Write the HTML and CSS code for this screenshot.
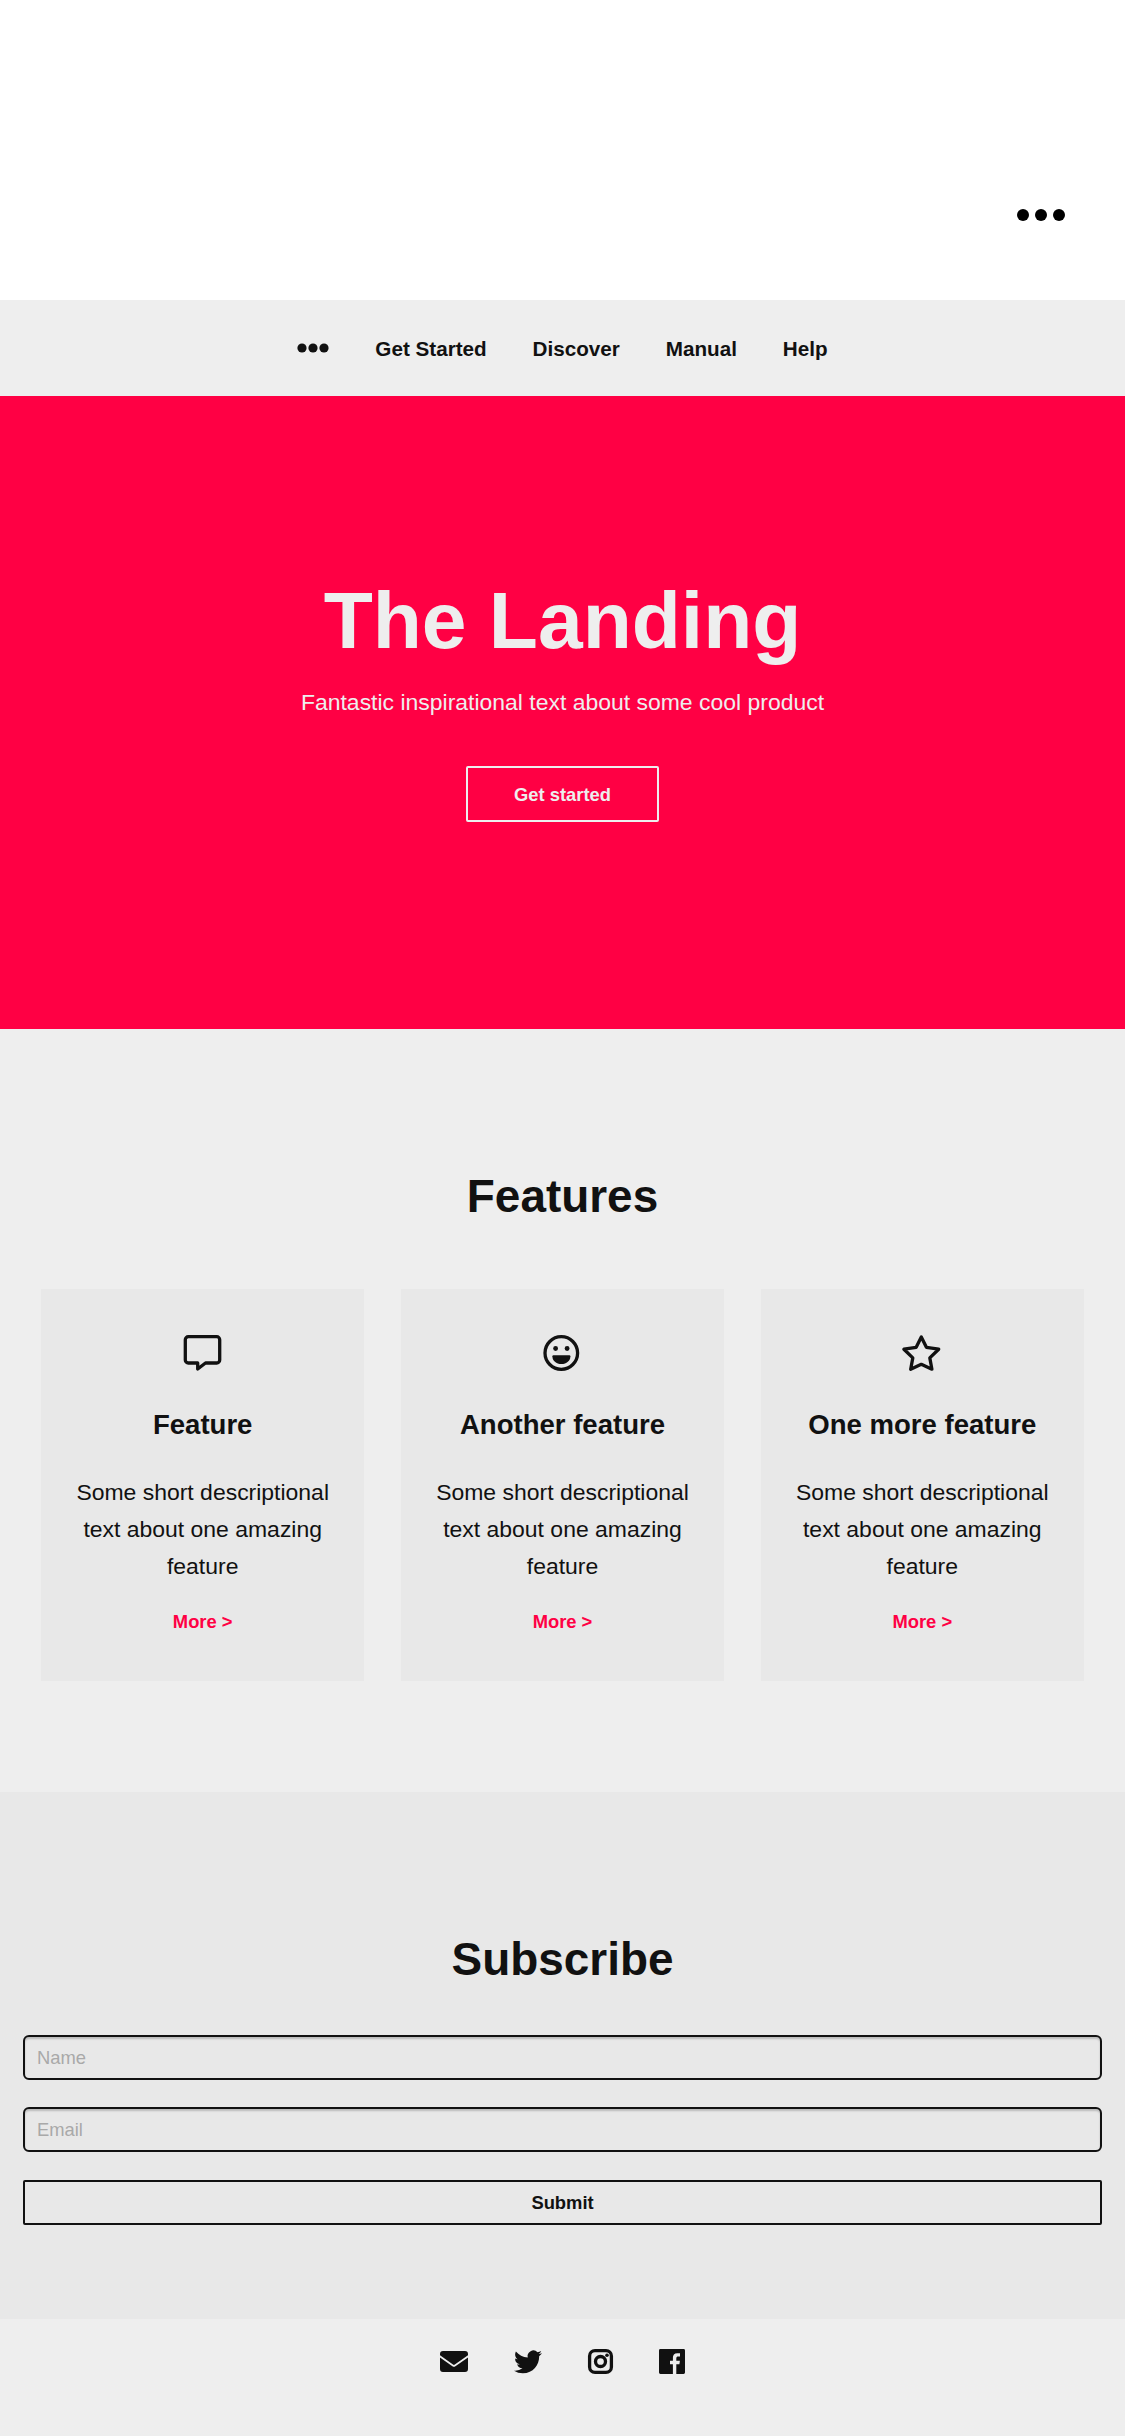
FILE: index.html
```html
<!DOCTYPE html>
<html lang="en">
<head>
<meta charset="utf-8">
<title>The Landing</title>
<link rel="stylesheet" href="styles.css">
</head>
<body>
<div class="topbar">
  <svg class="topbar-dots" viewBox="0 0 48 12"><circle cx="6" cy="6" r="6"/><circle cx="24" cy="6" r="6"/><circle cx="42" cy="6" r="6"/></svg>
</div>
<nav class="nav">
  <svg class="nav-dots" viewBox="0 0 32 10"><circle cx="5" cy="5" r="4.6"/><circle cx="16" cy="5" r="4.6"/><circle cx="27" cy="5" r="4.6"/></svg>
  <a>Get Started</a><a>Discover</a><a>Manual</a><a>Help</a>
</nav>
<header class="hero">
  <h1>The Landing</h1>
  <p>Fantastic inspirational text about some cool product</p>
  <a class="hero-button">Get started</a>
</header>
<section class="features">
  <h2>Features</h2>
  <div class="cards">
    <article class="card">
      <svg class="card-icon" viewBox="0 0 38 38"><path class="line" d="M4.3 1.7H32.7a3 3 0 0 1 3 3V25a3 3 0 0 1-3 3H21.5L13.7 34V28H4.3a3 3 0 0 1-3-3V4.7a3 3 0 0 1 3-3z"/></svg>
      <h3>Feature</h3>
      <p>Some short descriptional text about one amazing feature</p>
      <a>More &gt;</a>
    </article>
    <article class="card">
      <svg class="card-icon" viewBox="0 0 38 38"><circle class="line" cx="18.3" cy="18" r="16.3"/><circle cx="12.6" cy="13.5" r="2.4"/><circle cx="24.1" cy="13.5" r="2.4"/><path d="M10.4 20.2H26.4a1 1 0 0 1 1 1c0 4.6-3.8 7.8-9 7.8s-9-3.2-9-7.8a1 1 0 0 1 1-1z"/></svg>
      <h3>Another feature</h3>
      <p>Some short descriptional text about one amazing feature</p>
      <a>More &gt;</a>
    </article>
    <article class="card">
      <svg class="card-icon" viewBox="0 0 38 38"><path class="line" d="M18.3 2L23.4 12.3L35.7 14.2L26.8 22.9L28.9 34.2L18.3 29.3L7.7 34.2L9.8 22.9L.9 14.2L13.2 12.3z"/></svg>
      <h3>One more feature</h3>
      <p>Some short descriptional text about one amazing feature</p>
      <a>More &gt;</a>
    </article>
  </div>
</section>
<section class="subscribe">
  <h2>Subscribe</h2>
  <form class="form">
    <input type="text" placeholder="Name">
    <input type="text" placeholder="Email">
    <button type="button">Submit</button>
  </form>
</section>
<footer class="footer">
  <svg class="mail" viewBox="0 0 28 21"><path d="M3 0H25a3 3 0 0 1 3 3V4.3L14.8 13.6a1.6 1.6 0 0 1-1.8 0L0 4.3V3a3 3 0 0 1 3-3zM0 6.4L12.4 15.3a2.6 2.6 0 0 0 3 0L28 6.4V18a3 3 0 0 1-3 3H3a3 3 0 0 1-3-3z"/></svg>
  <svg class="twitter" viewBox="0 1.9 24 19.6"><path d="M23.953 4.57a10 10 0 01-2.825.775 4.958 4.958 0 002.163-2.723c-.951.555-2.005.959-3.127 1.184a4.92 4.92 0 00-8.384 4.482C7.69 8.095 4.067 6.13 1.64 3.162a4.822 4.822 0 00-.666 2.475c0 1.71.87 3.213 2.188 4.096a4.904 4.904 0 01-2.228-.616v.06a4.923 4.923 0 003.946 4.827 4.996 4.996 0 01-2.212.085 4.936 4.936 0 004.604 3.417 9.867 9.867 0 01-6.102 2.105c-.39 0-.779-.023-1.17-.067a13.995 13.995 0 007.557 2.209c9.053 0 13.998-7.496 13.998-13.985 0-.21 0-.42-.015-.63A9.935 9.935 0 0024 4.59z"/></svg>
  <svg class="instagram" viewBox="0 0 25 25"><rect class="line" x="1.6" y="1.6" width="21.8" height="21.8" rx="5.4"/><circle class="line" cx="12.5" cy="12.5" r="5"/><circle cx="19" cy="6.3" r="1.8"/></svg>
  <svg class="facebook" viewBox="0 0 26 25"><path d="M1.4 0H24.6A1.4 1.4 0 0 1 26 1.4V23.6A1.4 1.4 0 0 1 24.6 25H17.3V15.2H20.4L20.9 11.8H17.3V9.4C17.3 7.9 18 7.4 19.3 7.4H21V4.2H18.4C15.2 4.2 13.9 6.1 13.9 8.8V11.8H11V15.2H13.9V25H1.4A1.4 1.4 0 0 1 0 23.6V1.4A1.4 1.4 0 0 1 1.4 0z"/></svg>
</footer>
</body>
</html>
```
FILE: styles.css
```css
* { box-sizing: border-box; }
body {
  margin: 0;
  background: #eee;
  color: #111;
  font-family: "Liberation Sans", Helvetica, Arial, sans-serif;
  font-size: 22.96px;
  line-height: 36.74px;
}
h1, h2, h3, p { margin: 0; }
svg { display: block; flex: none; fill: #111; overflow: visible; }
.line { fill: none; stroke: #111; stroke-width: 3.3; stroke-linejoin: round; }

.topbar {
  height: 300px;
  padding: 208.5px 60px 0 0;
  background: #fff;
  display: flex;
  justify-content: flex-end;
}
.topbar-dots { width: 48px; height: 12px; fill: #000; }

.nav {
  height: 96px;
  padding-top: 2px;
  display: flex;
  align-items: center;
  justify-content: center;
  gap: 45.9px;
  font-size: 20.66px;
  font-weight: bold;
}
.nav-dots { width: 32px; height: 10px; margin-bottom: 2px; }

.hero {
  height: 633px;
  padding-top: 178px;
  background: #ff0044;
  color: #eee;
  display: flex;
  flex-direction: column;
  align-items: center;
}
.hero h1 { font-size: 80.36px; line-height: 92px; }
.hero p { margin-top: 18px; }
.hero-button {
  width: 193px;
  height: 56px;
  margin-top: 45px;
  border: 2px solid #eee;
  border-radius: 2px;
  font-size: 18.37px;
  font-weight: bold;
  line-height: 54px;
  text-align: center;
}

h2 { font-size: 45.92px; line-height: 55px; text-align: center; }
.features { height: 763px; padding: 140px 41.3px 0; }
.cards {
  margin-top: 65px;
  display: grid;
  grid-template-columns: repeat(3, 1fr);
  gap: 37px;
}
.card {
  height: 392px;
  padding: 46px 20px 0;
  background: #e8e8e8;
  display: flex;
  flex-direction: column;
  align-items: center;
  text-align: center;
}
.card-icon { width: 38px; height: 38px; }
.card h3 { margin-top: 35px; font-size: 27.55px; line-height: 33px; white-space: nowrap; }
.card p { margin-top: 33px; width: 270px; line-height: 37px; }
.card a {
  margin-top: 22px;
  color: #ff0044;
  font-size: 18.37px;
  font-weight: bold;
  line-height: 29.4px;
}

.subscribe { height: 527px; padding: 140px 23px 0; background: #e8e8e8; }
.form { margin-top: 48px; display: flex; flex-direction: column; gap: 27.4px; }
.form input, .form button {
  height: 45px;
  margin: 0;
  padding: 1px 12px 0;
  border: 2.3px solid #111;
  background: transparent;
  color: #111;
  font: 18.37px "Liberation Sans", Helvetica, Arial, sans-serif;
}
.form input { border-radius: 6px; box-shadow: inset 0 2px 2px rgba(0, 0, 0, .2); }
.form input::placeholder { color: #a9a9a9; opacity: 1; }
.form button { padding-top: 2px; border-radius: 2px; font-weight: bold; }

.footer {
  height: 117px;
  padding-bottom: 32px;
  display: flex;
  align-items: center;
  justify-content: center;
  gap: 46px;
}
.mail { width: 28px; height: 21px; }
.twitter { width: 28px; height: 23px; }
.instagram { width: 25px; height: 25px; }
.facebook { width: 26px; height: 25px; }
```
